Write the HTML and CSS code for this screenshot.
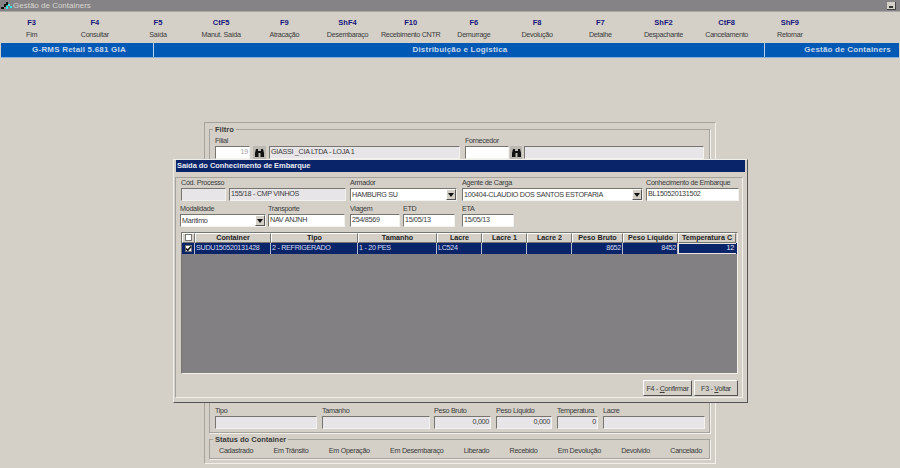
FILE: index.html
```html
<!DOCTYPE html>
<html lang="pt-BR">
<head>
    <meta charset="UTF-8">
    <title>Gestão de Containers</title>
    <link rel="stylesheet" href="styles.css">
</head>
<body>
    <header class="titlebar">
        <svg class="app-icon" width="11" height="9" viewBox="0 0 11 9"><path d="M0 6h3v2H0zM3 3h2v3H3zM5 1h2v3H5z" fill="#111"/><path d="M7 3h2v2H7zM5 5h2v3H5zM9 5h2v2H9z" fill="#3ee"/></svg>
        <span>Gestão de Containers</span>
        <div class="min-btn"></div>
    </header>

    <nav class="toolbar">
        <div class="tool"><b>F3</b><span>Fim</span></div>
        <div class="tool"><b>F4</b><span>Consultar</span></div>
        <div class="tool"><b>F5</b><span>Saída</span></div>
        <div class="tool"><b>CtF5</b><span>Manut. Saída</span></div>
        <div class="tool"><b>F9</b><span>Atracação</span></div>
        <div class="tool"><b>ShF4</b><span>Desembaraço</span></div>
        <div class="tool"><b>F10</b><span>Recebimento CNTR</span></div>
        <div class="tool"><b>F6</b><span>Demurrage</span></div>
        <div class="tool"><b>F8</b><span>Devolução</span></div>
        <div class="tool"><b>F7</b><span>Detalhe</span></div>
        <div class="tool"><b>ShF2</b><span>Despachante</span></div>
        <div class="tool"><b>CtF8</b><span>Cancelamento</span></div>
        <div class="tool"><b>ShF9</b><span>Retornar</span></div>
    </nav>

    <div class="bluebar">
        <div class="blue-left">G-RMS Retail 5.681 GIA</div>
        <div class="blue-mid">Distribuição e Logística</div>
        <div class="blue-right">Gestão de Containers</div>
    </div>

    <main class="form-outer">
        <section class="group filtro">
            <div class="legend">Filtro</div>
            <div class="filter-row">
                <label class="f w35">Filial<div class="input num faded">19</div></label>
                <div class="bino">
                    <svg width="11" height="10" viewBox="0 0 11 10"><path d="M1 9V5l1-4h2v2h3V1h2l1 4v4H6.500V5h-2v4z" fill="#111"/></svg>
                </div>
                <label class="f w191"><span class="nolabel"></span><div class="input ro">GIASSI _CIA LTDA - LOJA 1</div></label>
                <label class="f w44 ml2">Fornecedor<div class="input"></div></label>
                <div class="bino bino-b">
                    <svg width="11" height="10" viewBox="0 0 11 10"><path d="M1 9V5l1-4h2v2h3V1h2l1 4v4H6.500V5h-2v4z" fill="#111"/></svg>
                </div>
                <label class="f w180"><span class="nolabel"></span><div class="input ro"></div></label>
            </div>
            <div class="detail-row">
                <label class="f w102">Tipo<div class="input ro"></div></label>
                <label class="f w108">Tamanho<div class="input ro"></div></label>
                <label class="f w57 pull">Peso Bruto<div class="input ro num">0,000</div></label>
                <label class="f w56">Peso Líquido<div class="input ro num">0,000</div></label>
                <label class="f w41">Temperatura<div class="input ro num">0</div></label>
                <label class="f w102">Lacre<div class="input ro"></div></label>
            </div>
        </section>
        <section class="group status">
            <div class="legend">Status do Container</div>
            <div class="status-row">
                <span>Cadastrado</span>
                <span>Em Trânsito</span>
                <span>Em Operação</span>
                <span>Em Desembaraço</span>
                <span>Liberado</span>
                <span>Recebido</span>
                <span>Em Devolução</span>
                <span>Devolvido</span>
                <span>Cancelado</span>
            </div>
        </section>
    </main>

    <div class="dialog">
        <div class="dialog-title">Saída do Conhecimento de Embarque</div>
        <div class="dialog-body">
            <div class="dlg-row first">
                <label class="f w45">Cód. Processo<div class="input ro"></div></label>
                <label class="f w117"><span class="nolabel"></span><div class="input ro">155/18 - CMP VINHOS</div></label>
                <label class="f w107 ml1">Armador<div class="input combo">HAMBURG SU<i class="arrow"></i></div></label>
                <label class="f w181 ml2">Agente de Carga<div class="input combo">100404-CLAUDIO DOS SANTOS ESTOFARIA<i class="arrow"></i></div></label>
                <label class="f w93">Conhecimento de Embarque<div class="input">BL150520131502</div></label>
            </div>
            <div class="dlg-row second">
                <label class="f w86">Modalidade<div class="input combo">Marítimo<i class="arrow"></i></div></label>
                <label class="f w77">Transporte<div class="input">NAV ANJNH</div></label>
                <label class="f w50 ml3">Viagem<div class="input">254/8569</div></label>
                <label class="f w52 ml1">ETD<div class="input">15/05/13</div></label>
                <label class="f w52 ml5">ETA<div class="input">15/05/13</div></label>
            </div>
            <div class="grid">
                <div class="grid-head">
                    <div><i class="check"></i></div>
                    <div>Container</div>
                    <div>Tipo</div>
                    <div>Tamanho</div>
                    <div>Lacre</div>
                    <div>Lacre 1</div>
                    <div>Lacre 2</div>
                    <div>Peso Bruto</div>
                    <div>Peso Líquido</div>
                    <div>Temperatura C</div>
                </div>
                <div class="grid-line">
                    <div class="chk-cell">
                        <i class="check">
                            <svg width="7" height="7" viewBox="0 0 7 7"><path d="M1 3.500l1.700 1.800L6 1.500" fill="none" stroke="#111" stroke-width="1.600"/></svg>
                        </i>
                    </div>
                    <div>SUDU150520131428</div>
                    <div>2 - REFRIGERADO</div>
                    <div>1 - 20 PES</div>
                    <div>LC524</div>
                    <div></div>
                    <div></div>
                    <div class="right">8652</div>
                    <div class="right">8452</div>
                    <div class="right cur">12</div>
                </div>
            </div>
            <div class="dlg-buttons">
                <button class="btn btn-a">F4 - <u>C</u>onfirmar</button>
                <button class="btn btn-b">F3 - <u>V</u>oltar</button>
            </div>
        </div>
    </div>
</body>
</html>
```

FILE: styles.css
```css
* {
    box-sizing: border-box;
}

body {
    margin: 0;
    width: 900px;
    height: 468px;
    overflow: hidden;
    background-color: #d4d0c8;
    font-family: "Liberation Sans", Arial, sans-serif;
    font-size: 7.2px;
    letter-spacing: -0.3px;
    color: #3a3a3a;
    position: relative;
}

label {
    display: block;
}

.titlebar {
    height: 12px;
    background-color: #858385;
    border-bottom: 1px solid #aaa8a4;
    color: #d8d6d0;
    font-size: 8px;
    letter-spacing: 0;
    display: flex;
    align-items: center;
    padding-left: 1px;
}

.app-icon {
    margin-right: 1px;
}

.min-btn {
    width: 9px;
    height: 8px;
    margin-left: auto;
    margin-right: 4px;
    background-color: #d4d0c8;
    border-bottom: 1px solid #444;
    border-right: 1px solid #444;
    position: relative;
}

.min-btn::after {
    content: "";
    position: absolute;
    left: 2px;
    bottom: 1px;
    width: 4px;
    height: 2px;
    background-color: #333;
}

.toolbar {
    display: grid;
    grid-template-columns: repeat(13, 63.2px);
    height: 31px;
    padding-top: 7px;
}

.tool {
    display: flex;
    flex-direction: column;
    align-items: center;
    gap: 4px;
    white-space: nowrap;
}

.tool b {
    color: #14147a;
    font-size: 7.5px;
    letter-spacing: 0;
    line-height: 8px;
}

.tool span {
    line-height: 8px;
}

.bluebar {
    margin: 0 1px;
    height: 15px;
    background-color: #005ab5;
    border-bottom: 1px solid #7fb0e0;
    display: flex;
    align-items: center;
    color: #c8d8ec;
    font-size: 8px;
    font-weight: bold;
    letter-spacing: 0.2px;
}

.blue-left {
    width: 153px;
    text-align: center;
    padding-left: 4px;
    border-right: 1px solid #b8d4ef;
    height: 100%;
    line-height: 14px;
}

.blue-mid {
    width: 611px;
    text-align: center;
    padding-left: 2px;
    border-right: 1px solid #b8d4ef;
    height: 100%;
    line-height: 14px;
}

.blue-right {
    flex: 1;
    text-align: right;
    padding-right: 8px;
    line-height: 14px;
}

.form-outer {
    width: 512px;
    height: 342px;
    margin: 64px 0 0 204px;
    border: 1px solid #a6a39c;
    border-right-color: #f2f0ea;
    border-bottom-color: #f2f0ea;
    padding: 6px 5px 0 4px;
    display: flex;
    flex-direction: column;
    gap: 6px;
}

.group {
    border: 1px solid #a6a39c;
    box-shadow: 1px 1px 0 #f2f0ea;
    position: relative;
}

.legend {
    position: absolute;
    top: -5px;
    left: 3px;
    padding: 0 2px;
    background-color: #d4d0c8;
    font-weight: bold;
    font-size: 7.5px;
    letter-spacing: 0;
    line-height: 9px;
}

.filtro {
    height: 304px;
    padding: 6px 5px 0 5px;
    display: flex;
    flex-direction: column;
    justify-content: space-between;
}

.filter-row {
    display: flex;
    align-items: flex-end;
    gap: 3px;
}

.detail-row {
    display: flex;
    gap: 5px;
    padding-bottom: 3px;
}

.status {
    height: 20px;
}

.status-row {
    display: flex;
    justify-content: space-between;
    padding: 6px 7px 0 9px;
    line-height: 9px;
}

.f {
    line-height: 9px;
    white-space: nowrap;
    flex: none;
}

.nolabel {
    display: block;
    height: 9px;
}

.w35 { width: 35px; }
.w41 { width: 41px; }
.w44 { width: 44px; }
.w45 { width: 45px; }
.w50 { width: 50px; }
.w52 { width: 52px; }
.w56 { width: 56px; }
.w57 { width: 57px; }
.w77 { width: 77px; }
.w86 { width: 86px; }
.w93 { width: 93px; }
.w102 { width: 102px; }
.w107 { width: 107px; }
.w108 { width: 108px; }
.w117 { width: 117px; }
.w180 { width: 180px; }
.w181 { width: 181px; }
.w191 { width: 191px; }

.ml1 { margin-left: 1px; }
.ml2 { margin-left: 2px; }
.ml3 { margin-left: 3px; }
.ml5 { margin-left: 5px; }
.pull { margin-left: -1px; }

.input {
    height: 13px;
    margin-top: 1px;
    background-color: #fff;
    border: 1px solid #f4f2ee;
    border-top: 1px solid #77756f;
    border-left: 1px solid #77756f;
    padding-left: 1px;
    line-height: 10px;
    color: #3a3a3a;
    overflow: hidden;
    position: relative;
}

.ro {
    background-color: #e8e5e8;
}

.num {
    text-align: right;
    padding-right: 1px;
}

.faded {
    color: #a0a0a0;
}

.combo {
    padding-right: 12px;
    line-height: 12px;
}

.arrow {
    position: absolute;
    right: 0;
    top: 0;
    width: 10px;
    height: 11px;
    background-color: #d4d0c8;
    border: 1px solid;
    border-color: #fff #555 #555 #fff;
}

.arrow::after {
    content: "";
    position: absolute;
    left: 1px;
    top: 3px;
    border: 3px solid transparent;
    border-top: 4px solid #111;
    border-bottom: 0;
}

.bino {
    width: 13px;
    height: 13px;
    display: flex;
    align-items: center;
    justify-content: center;
    background-color: #bbb8b2;
}

.bino-b {
    margin-left: -2px;
    margin-right: -1px;
    width: 12px;
}

.dialog {
    position: absolute;
    left: 173px;
    top: 159px;
    width: 575px;
    height: 244px;
    background-color: #d4d0c8;
    border: 1px solid #f0eee8;
    border-right-color: #555;
    border-bottom-color: #555;
    padding: 0 2px;
}

.dialog-title {
    height: 12px;
    background-color: #0a246a;
    color: #e8eaf2;
    font-size: 7.5px;
    font-weight: bold;
    letter-spacing: -0.05px;
    line-height: 11px;
    padding-left: 1px;
}

.dialog-body {
    margin: 5px 2px 0 -1px;
    height: 221px;
    border: 1px solid #a6a39c;
    border-right-color: #f2f0ea;
    border-bottom-color: #f2f0ea;
    padding: 0 4px 0 4px;
}

.dlg-row {
    display: flex;
    gap: 3px;
}

.first {
    padding-left: 1px;
}

.second {
    margin-top: 3px;
    gap: 2px;
}

.grid {
    margin: 5px 0 0 1px;
    width: 557px;
    height: 142px;
    background-color: #828082;
    border-top: 1px solid #77756f;
    border-left: 1px solid #77756f;
    border-bottom: 1px solid #f2f0ea;
    border-right: 1px solid #f2f0ea;
}

.grid-head,
.grid-line {
    display: grid;
    grid-template-columns: 13px 76px 87px 79px 45px 45px 45px 51px 55px 58px;
}

.grid-head {
    height: 10px;
    background-color: #d4d0c8;
    font-weight: bold;
    letter-spacing: 0;
    text-align: center;
    color: #222;
}

.grid-head > div {
    border-right: 1px solid #77756f;
    border-bottom: 1px solid #77756f;
    border-left: 1px solid #fff;
    border-top: 1px solid #fff;
    white-space: nowrap;
    overflow: hidden;
    line-height: 8px;
}

.grid-line {
    height: 11px;
    background-color: #0a246a;
    color: #d4dcf0;
    line-height: 10px;
}

.grid-line > div {
    border-right: 1px solid #b4bcd0;
    padding-left: 1px;
    white-space: nowrap;
    overflow: hidden;
}

.grid-line .right {
    text-align: right;
    padding-right: 1px;
}

.grid-line .cur {
    border: 1px solid #e8e6e0;
    border-right: 0;
    padding-right: 2px;
    line-height: 8px;
    background-color: #0a246a;
    color: #e8e8f0;
}

.grid-line .chk-cell {
    padding: 2px 0 0 3px;
}

.grid-head .check {
    margin: 0 auto;
}

.check {
    display: block;
    width: 7px;
    height: 7px;
    background-color: #fff;
    border: 1px solid #77756f;
}

.check svg {
    display: block;
    margin: -1px;
}

.dlg-buttons {
    display: flex;
    justify-content: flex-end;
    gap: 2px;
    margin-top: 6px;
}

.btn {
    height: 16px;
    padding: 0;
    font: inherit;
    letter-spacing: inherit;
    white-space: nowrap;
    color: #3a3a3a;
    background-color: #d4d0c8;
    border: 1px solid;
    border-color: #fff #555 #555 #fff;
}

.btn-a { width: 49px; }
.btn-b { width: 44px; }
```
